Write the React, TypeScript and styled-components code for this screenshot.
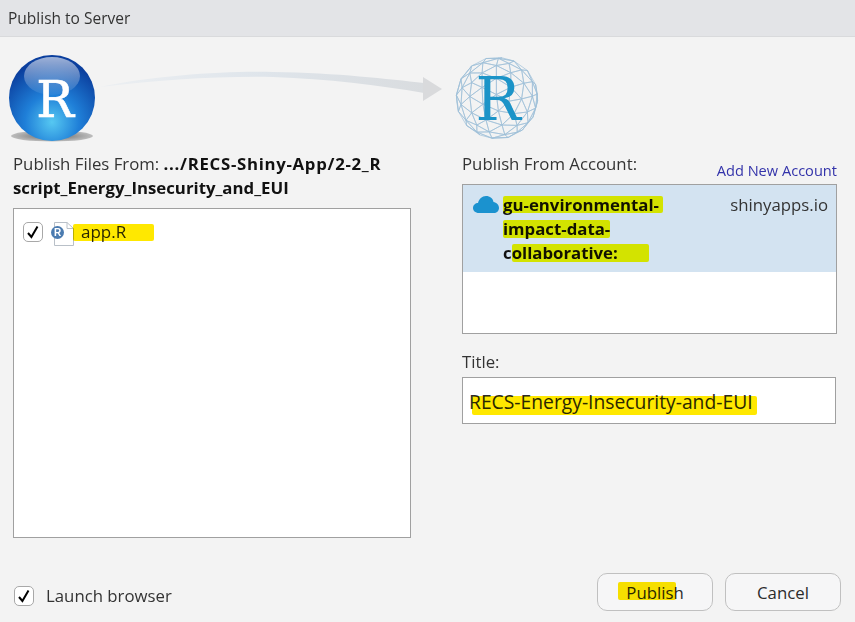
import React from "react";
import styled, { createGlobalStyle } from "styled-components";

const GlobalStyle = createGlobalStyle`
  html, body { margin: 0; padding: 0; }
  body {
    background: #f3f3f3;
    font-family: "Open Sans", "Noto Sans", sans-serif;
    color: #2b2b2b;
  }
`;

const Dialog = styled.div`
  width: 855px;
  height: 622px;
  overflow: hidden;
`;

const TitleBar = styled.div`
  height: 36px;
  padding-left: 8px;
  display: flex;
  align-items: center;
  background: #e3e4e7;
  border-bottom: 1px solid #d9dadc;
  font-size: 15.5px;
  color: #333;
`;

const Graphics = styled.div`
  height: 105px;
  padding: 18px 0 0 8px;
  box-sizing: border-box;
  display: flex;
  align-items: flex-start;
`;

const Columns = styled.div`
  display: grid;
  grid-template-columns: 398px 375px;
  column-gap: 51px;
  padding-left: 13px;
  margin-top: 10px;
`;

const Column = styled.div`
  display: flex;
  flex-direction: column;
`;

const Label = styled.div`
  font-size: 16.8px;
  line-height: 24px;
  color: #333;
  height: 56px;
  white-space: nowrap;
  b { color: #111; font-weight: 700; }
`;

const PathStart = styled.b`
  letter-spacing: 0.7px;
`;

const FileList = styled.div`
  height: 330px;
  box-sizing: border-box;
  background: #fff;
  border: 1px solid #a0a0a0;
  padding: 13px 9px;
  display: flex;
  align-items: flex-start;
`;

const Check = styled.span`
  width: 20px;
  height: 20px;
  box-sizing: border-box;
  background: #fff;
  border: 1px solid #a8a8a8;
  border-radius: 5px;
  display: inline-flex;
  align-items: center;
  justify-content: center;
  flex: none;
`;

const FileIcon = styled.svg`
  margin-left: 8px;
  flex: none;
`;

const FileName = styled.span`
  position: relative;
  margin-left: 7px;
  font-size: 17px;
  line-height: 20px;
  color: #2b2b2b;
`;

const Highlight = styled.i<{ $color?: string; $l: number; $t: number; $w: number; $h: number }>`
  position: absolute;
  left: ${(p) => p.$l}px;
  top: ${(p) => p.$t}px;
  width: ${(p) => p.$w}px;
  height: ${(p) => p.$h}px;
  background: ${(p) => p.$color || "#ffe800"};
  mix-blend-mode: multiply;
  border-radius: 2px;
`;

const LabelRow = styled.div`
  height: 32px;
  display: flex;
  justify-content: space-between;
  align-items: flex-start;
  font-size: 16.8px;
  line-height: 24px;
  color: #333;
`;

const AddLink = styled.a`
  font-size: 14.6px;
  line-height: 20px;
  color: #3333aa;
  margin-top: 8px;
`;

const AccountBox = styled.div`
  height: 150px;
  box-sizing: border-box;
  background: #fff;
  border: 1px solid #a0a0a0;
`;

const AccountRow = styled.div`
  position: relative;
  height: 87px;
  background: #d3e3f1;
  display: flex;
  align-items: flex-start;
  padding: 8px 8px 0 10px;
  box-sizing: border-box;
`;

const Cloud = styled.svg`
  flex: none;
  margin-top: 3px;
`;

const AccountName = styled.div`
  margin-left: 4px;
  width: 190px;
  font-size: 16.8px;
  font-weight: 700;
  line-height: 24px;
  color: #111;
`;

const Server = styled.div`
  margin-left: auto;
  font-size: 16.8px;
  line-height: 24px;
  color: #333;
`;

const TitleLabel = styled.div`
  margin-top: 17px;
  font-size: 16.8px;
  line-height: 22px;
  color: #333;
`;

const TitleInput = styled.div`
  position: relative;
  margin-top: 4px;
  height: 47px;
  width: 374px;
  box-sizing: border-box;
  background: #fff;
  border: 1px solid #a0a0a0;
  padding: 12px 0 0 6px;
  font-size: 19.3px;
  line-height: 24px;
  color: #2b2b2b;
`;

const Footer = styled.div`
  margin-top: 35px;
  padding: 0 14px;
  display: flex;
  align-items: center;
`;

const Launch = styled.label`
  display: flex;
  align-items: center;
  gap: 12px;
  margin-top: 7px;
  font-size: 16.8px;
  color: #333;
`;

const Buttons = styled.div`
  margin-left: auto;
  display: flex;
  gap: 12px;
`;

const Button = styled.button`
  position: relative;
  width: 116px;
  height: 38px;
  padding: 0;
  background: #f6f6f7;
  border: 1px solid #c0c0c0;
  border-radius: 10px;
  font-family: inherit;
  font-size: 16.8px;
  color: #2b2b2b;
`;

const Tick = () => (
  <svg width="14" height="14" viewBox="0 0 14 14">
    <path d="M2 8 L5.4 12 L11.5 1.5" fill="none" stroke="#000" strokeWidth="2" />
  </svg>
);

const RLogo = () => (
  <svg width="90" height="90" viewBox="0 0 90 90" style={{ flex: "none" }}>
    <defs>
      <radialGradient id="ball" cx="50%" cy="78%" r="70%">
        <stop offset="0%" stopColor="#56c8f2" />
        <stop offset="45%" stopColor="#1f7fd8" />
        <stop offset="100%" stopColor="#0b3f9e" />
      </radialGradient>
      <linearGradient id="gloss" x1="0" y1="0" x2="0" y2="1">
        <stop offset="0%" stopColor="#fff" stopOpacity="0.6" />
        <stop offset="100%" stopColor="#fff" stopOpacity="0.05" />
      </linearGradient>
      <radialGradient id="shade">
        <stop offset="0%" stopColor="#555" />
        <stop offset="100%" stopColor="#999" stopOpacity="0.6" />
      </radialGradient>
    </defs>
    <ellipse cx="44" cy="81" rx="41" ry="5.5" fill="url(#shade)" />
    <circle cx="44" cy="43" r="43" fill="url(#ball)" />
    <ellipse cx="44" cy="21" rx="28" ry="19" fill="url(#gloss)" />
    <text x="47" y="62" textAnchor="middle" fontFamily="DejaVu Serif, serif" fontSize="50" fill="#fff" stroke="#fff" strokeWidth="0.6">R</text>
  </svg>
);

const Arrow = () => (
  <svg width="357" height="50" viewBox="0 0 357 50" style={{ flex: "none" }}>
    <defs>
      <linearGradient id="tail" x1="0" y1="0" x2="1" y2="0">
        <stop offset="0%" stopColor="#eceff2" />
        <stop offset="50%" stopColor="#dfe5eb" />
        <stop offset="100%" stopColor="#d9dcdf" />
      </linearGradient>
    </defs>
    <path d="M2 32 C60 20 130 16 175 17 C240 18 290 24 326 28 L326 38 C280 30 230 24 175 22 C120 21 60 25 2 32 Z" fill="url(#tail)" />
    <path d="M325 22 L344 34 L325 46 Z" fill="#d9dadc" />
  </svg>
);

// wireframe sphere: icosahedron faces split three ways along each edge
const globeLines = (() => {
  const t = (1 + Math.sqrt(5)) / 2;
  const n = 3;
  const norm = (v: number[]) => {
    const l = Math.hypot(v[0], v[1], v[2]);
    return [v[0] / l, v[1] / l, v[2] / l];
  };
  const rot = (v: number[]) => {
    const a = 0.35, b = 0.5;
    const x = v[0] * Math.cos(a) + v[2] * Math.sin(a);
    const z = -v[0] * Math.sin(a) + v[2] * Math.cos(a);
    const y = v[1] * Math.cos(b) - z * Math.sin(b);
    return [x, y, v[1] * Math.sin(b) + z * Math.cos(b)];
  };
  const verts = [
    [-1, t, 0], [1, t, 0], [-1, -t, 0], [1, -t, 0], [0, -1, t], [0, 1, t],
    [0, -1, -t], [0, 1, -t], [t, 0, -1], [t, 0, 1], [-t, 0, -1], [-t, 0, 1],
  ];
  const base = [
    [0, 11, 5], [0, 5, 1], [0, 1, 7], [0, 7, 10], [0, 10, 11], [1, 5, 9], [5, 11, 4], [11, 10, 2],
    [10, 7, 6], [7, 1, 8], [3, 9, 4], [3, 4, 2], [3, 2, 6], [3, 6, 8], [3, 8, 9], [4, 9, 5],
    [2, 4, 11], [6, 2, 10], [8, 6, 7], [9, 8, 1],
  ];
  const faces: number[][][] = [];
  base.forEach(([ia, ib, ic]) => {
    const [a, b, c] = [verts[ia], verts[ib], verts[ic]];
    const at = (i: number, j: number) =>
      norm(a.map((v, k) => (v * (n - i - j) + b[k] * i + c[k] * j) / n));
    for (let i = 0; i < n; i++) {
      for (let j = 0; j < n - i; j++) {
        faces.push([at(i, j), at(i + 1, j), at(i, j + 1)]);
        if (i + j < n - 1) faces.push([at(i + 1, j), at(i + 1, j + 1), at(i, j + 1)]);
      }
    }
  });
  return faces
    .map((f) => f.map(rot))
    .filter((f) => f[0][2] + f[1][2] + f[2][2] > -0.1)
    .map((f) => "M" + f.map((p) => `${(42 + p[0] * 41).toFixed(1)} ${(42 + p[1] * 41).toFixed(1)}`).join("L") + "Z")
    .join("");
})();

const Globe = () => (
  <svg width="84" height="84" viewBox="0 0 84 84" style={{ flex: "none", marginTop: 1 }}>
    <path d={globeLines} fill="none" stroke="#9fc0d8" strokeWidth="0.7" />
    <text x="43" y="64" textAnchor="middle" fontFamily="DejaVu Serif, serif" fontSize="60" fill="#1c94c8">R</text>
  </svg>
);

export default function App() {
  return (
    <Dialog>
      <GlobalStyle />
      <TitleBar>Publish to Server</TitleBar>
      <Graphics>
        <RLogo />
        <Arrow />
        <Globe />
      </Graphics>
      <Columns>
        <Column>
          <Label>
            Publish Files From: <PathStart>.../RECS-Shiny-App/2-2_R</PathStart>
            <br />
            <b>script_Energy_Insecurity_and_EUI</b>
          </Label>
          <FileList>
            <Check><Tick /></Check>
            <FileIcon width="23" height="24" viewBox="0 0 23 24">
              <path d="M3.5 0.5 H16 L22.5 6.5 V23.5 H3.5 Z" fill="#fff" stroke="#b9c0c8" />
              <path d="M16 0.5 V6.5 H22.5" fill="none" stroke="#b9c0c8" />
              <circle cx="6.5" cy="10.5" r="6.5" fill="#4b7bb0" />
              <text x="6.5" y="14" textAnchor="middle" fontSize="10" fontWeight="700" fontFamily="Liberation Sans, sans-serif" fill="#fff">R</text>
            </FileIcon>
            <FileName>
              <Highlight $l={-8} $t={2} $w={81} $h={17} />
              app.R
            </FileName>
          </FileList>
        </Column>
        <Column>
          <LabelRow>
            Publish From Account:
            <AddLink>Add New Account</AddLink>
          </LabelRow>
          <AccountBox>
            <AccountRow>
              <Cloud width="26" height="17" viewBox="0 0 26 17">
                <path d="M6 17 C2 17 0 14.5 0 12 C0 9 2.5 7 5 7 C6 3 9 0 13 0 C17 0 20 2.5 20.5 6 C23.5 6.5 26 8.5 26 12 C26 15 23.5 17 21 17 Z" fill="#1b92cf" />
              </Cloud>
              <AccountName>
                gu-environmental-
                <br />
                impact-data-
                <br />
                collaborative:
              </AccountName>
              <Highlight $color="#ffff00" $l={40} $t={11} $w={160} $h={17} />
              <Highlight $color="#ffff00" $l={40} $t={35} $w={107} $h={18} />
              <Highlight $color="#ffff00" $l={49} $t={59} $w={137} $h={18} />
              <Server>shinyapps.io</Server>
            </AccountRow>
          </AccountBox>
          <TitleLabel>Title:</TitleLabel>
          <TitleInput>
            <Highlight $l={9} $t={18} $w={285} $h={19} />
            RECS-Energy-Insecurity-and-EUI
          </TitleInput>
        </Column>
      </Columns>
      <Footer>
        <Launch>
          <Check><Tick /></Check>
          Launch browser
        </Launch>
        <Buttons>
          <Button>
            <Highlight $l={20} $t={8} $w={58} $h={18} />
            Publish
          </Button>
          <Button>Cancel</Button>
        </Buttons>
      </Footer>
    </Dialog>
  );
}
